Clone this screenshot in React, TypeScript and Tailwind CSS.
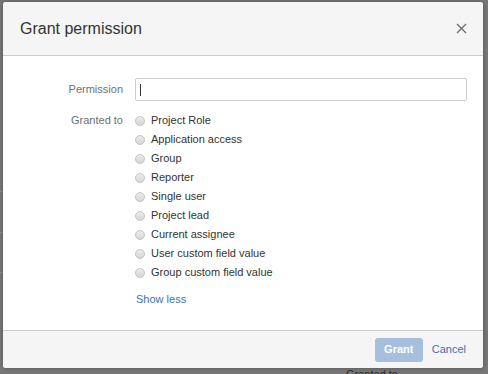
import React from 'react';

const options = [
  'Project Role',
  'Application access',
  'Group',
  'Reporter',
  'Single user',
  'Project lead',
  'Current assignee',
  'User custom field value',
  'Group custom field value',
];

function Radio() {
  return (
    <span className="h-[10px] w-[10px] shrink-0 rounded-full border border-[#c4c4c4] bg-gradient-to-b from-[#ececec] to-[#d6d6d6]" />
  );
}

export default function App() {
  return (
    <div
      className="relative h-[374px] w-[488px] overflow-hidden bg-[#777777] pl-[3px] pt-[2px]"
      style={{ fontFamily: '"Liberation Sans", Arial, sans-serif' }}
    >
      {/* faint page behind the overlay */}
      <div className="absolute left-0 top-[191px] h-px w-[3px] bg-[#8a8a8a]" />
      <div className="absolute left-0 top-[232px] h-px w-[3px] bg-[#8a8a8a]" />
      <div className="absolute left-0 top-[272px] h-px w-[3px] bg-[#8a8a8a]" />
      <div className="absolute left-[346px] top-[366px] text-[11px] text-[#2a2a2a]">Granted to</div>

      <div className="relative z-10 flex h-[366px] w-[480px] flex-col overflow-hidden rounded-[3px] bg-white shadow-[0_0_4px_rgba(0,0,0,0.3)]">
        {/* header */}
        <div className="flex h-[54px] shrink-0 items-center justify-between border-b border-[#cccccc] bg-[#f5f5f5] pl-[17px] pr-[16px]">
          <h2 className="text-[16px] font-normal text-[#333333]">Grant permission</h2>
          <svg width="11" height="11" viewBox="0 0 11 11">
            <path d="M1 1L10 10M10 1L1 10" stroke="#707070" strokeWidth="1.4" />
          </svg>
        </div>

        {/* body */}
        <div className="flex-1 pt-[22px] pr-[16px]">
          <div className="flex items-center">
            <label className="w-[120px] shrink-0 text-right text-[11px] text-[#707070]">Permission</label>
            <div className="ml-[12px] flex h-[23px] flex-1 items-center rounded-[2px] border border-[#cccccc] bg-white pl-[4px]">
              <span className="h-[12px] w-px bg-[#333333]" />
            </div>
          </div>

          <div className="mt-[10px] flex">
            <label className="w-[120px] shrink-0 text-right text-[11px] leading-[19px] text-[#707070]">
              Granted to
            </label>
            <div className="ml-[12px] flex flex-col">
              {options.map((o) => (
                <div key={o} className="flex h-[19px] items-center gap-[6px]">
                  <Radio />
                  <span className="text-[11px] text-[#333333]">{o}</span>
                </div>
              ))}
              <a className="mt-[8px] pl-[1px] text-[11px] leading-[19px] text-[#3b73af]">Show less</a>
            </div>
          </div>
        </div>

        {/* footer */}
        <div className="flex h-[38px] shrink-0 items-center justify-end gap-[9px] border-t border-[#cccccc] bg-[#f5f5f5] pr-[17px]">
          <button className="h-[24px] w-[48px] rounded-[3px] bg-[#a6bfdc] text-[11px] font-bold text-white">
            Grant
          </button>
          <button className="text-[11px] text-[#3b73af]">Cancel</button>
        </div>
      </div>
    </div>
  );
}
